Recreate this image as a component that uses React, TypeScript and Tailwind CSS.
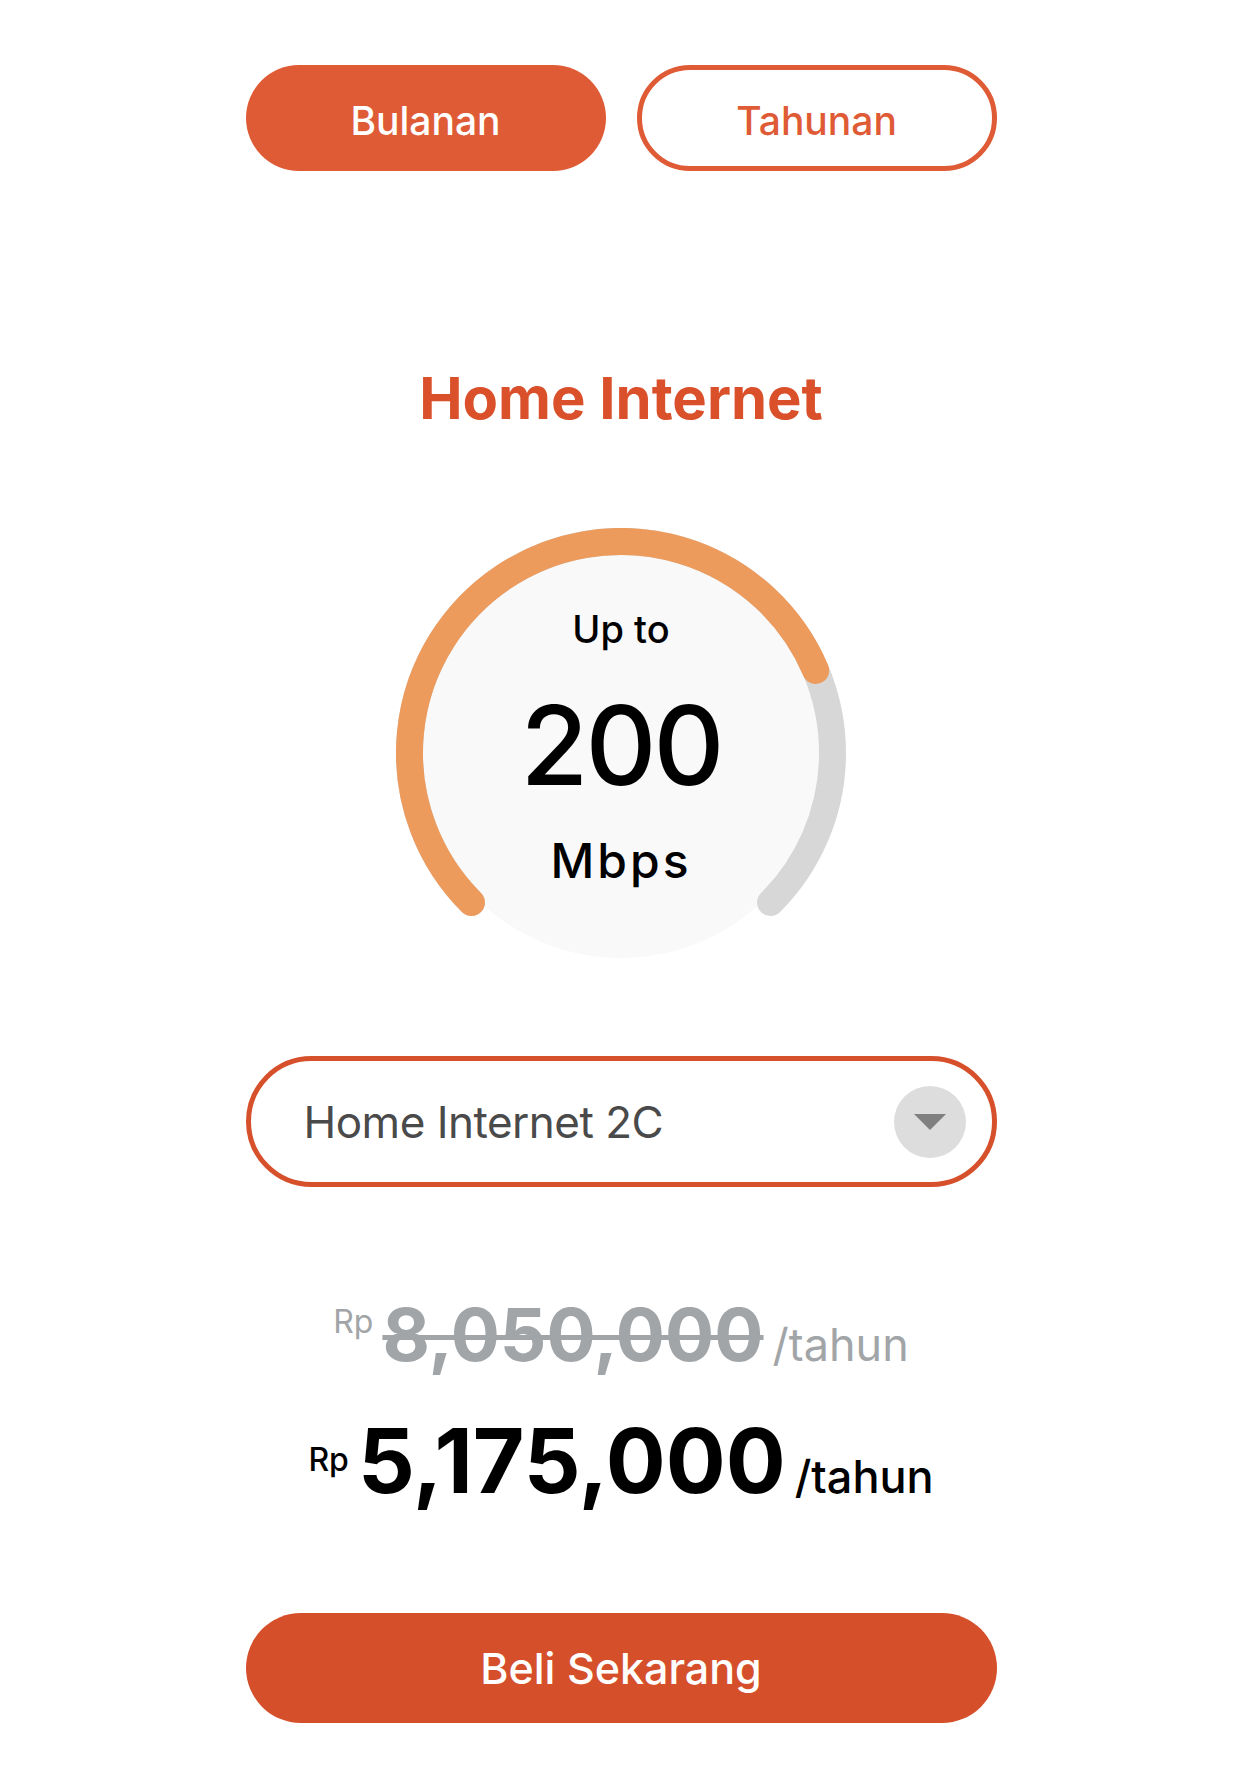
import { useState } from 'react'

const font = { fontFamily: 'Inter, "Liberation Sans", Arial, sans-serif' }

function SpeedGauge() {
  // arc runs 270deg clockwise from bottom-left; orange part ends near 337deg
  return (
    <div className="relative h-[450px] w-[450px]">
      <svg width="450" height="450" viewBox="0 0 450 450" className="block">
        <circle cx="225" cy="225" r="205" fill="#f9f9f9" />
        <path
          d="M 75.45 374.55 A 211.5 211.5 0 1 1 374.55 374.55"
          fill="none"
          stroke="#d7d7d7"
          strokeWidth="27"
          strokeLinecap="round"
        />
        <path
          d="M 75.45 374.55 A 211.5 211.5 0 1 1 419.7 142.4"
          fill="none"
          stroke="#ec9b5d"
          strokeWidth="27"
          strokeLinecap="round"
        />
      </svg>
      <div className="absolute inset-0 flex flex-col items-center text-black">
        <div className="mt-[82px] text-[38px] font-medium leading-none">Up to</div>
        <div className="mt-[42px] text-[110px] font-medium leading-none tracking-[-3px]">200</div>
        <div className="mt-[37px] text-[48px] font-medium leading-none tracking-[3px]">Mbps</div>
      </div>
    </div>
  )
}

export default function App() {
  const [period, setPeriod] = useState<'bulanan' | 'tahunan'>('bulanan')

  const active = 'h-[106px] w-[360px] rounded-full bg-[#df5b36] pt-[6px] text-[39px] font-medium text-white'
  const idle =
    'h-[106px] w-[360px] rounded-full border-[5px] border-[#df5b36] bg-white pt-[6px] text-[39px] font-medium text-[#df5b36]'

  return (
    <div className="flex min-h-[1785px] w-full flex-col items-center bg-white" style={font}>
      <div className="mt-[65px] flex w-[751px] justify-between">
        <button onClick={() => setPeriod('bulanan')} className={period === 'bulanan' ? active : idle}>
          Bulanan
        </button>
        <button onClick={() => setPeriod('tahunan')} className={period === 'tahunan' ? active : idle}>
          Tahunan
        </button>
      </div>

      <h1 className="mt-[198px] text-[58px] font-bold leading-none text-[#d9502b]">Home Internet</h1>

      <div className="mt-[101px]">
        <SpeedGauge />
      </div>

      <div className="mt-[78px] flex h-[131px] w-[751px] items-center justify-between rounded-full border-[5px] border-[#d6502b] pl-[53px] pr-[26px]">
        <span className="text-[44px] leading-none tracking-[-0.5px] text-[#4a4a4a]">Home Internet 2C</span>
        <span className="flex h-[72px] w-[72px] items-center justify-center rounded-full bg-[#dddddd]">
          <svg width="32" height="16" viewBox="0 0 32 16">
            <path d="M0 0 H32 L16 16 Z" fill="#808080" />
          </svg>
        </span>
      </div>

      <div className="mt-[111px] flex items-baseline justify-center gap-[9px] text-[#a2a5a8]">
        <span className="mt-[8px] self-start text-[32px] leading-none">Rp</span>
        <span className="text-[73px] font-bold leading-none line-through decoration-[length:5px]">
          8,050,000
        </span>
        <span className="text-[45px] leading-none">/tahun</span>
      </div>

      <div className="mt-[45px] flex items-baseline justify-center gap-[9px] text-black">
        <span className="mt-[28px] self-start text-[32px] font-medium leading-none">Rp</span>
        <span className="text-[89px] font-bold leading-none">5,175,000</span>
        <span className="text-[45px] font-medium leading-none">/tahun</span>
      </div>

      <button className="mt-[108px] h-[110px] w-[751px] rounded-full bg-[#d64f2b] text-[43px] font-medium text-white">
        Beli Sekarang
      </button>
    </div>
  )
}
